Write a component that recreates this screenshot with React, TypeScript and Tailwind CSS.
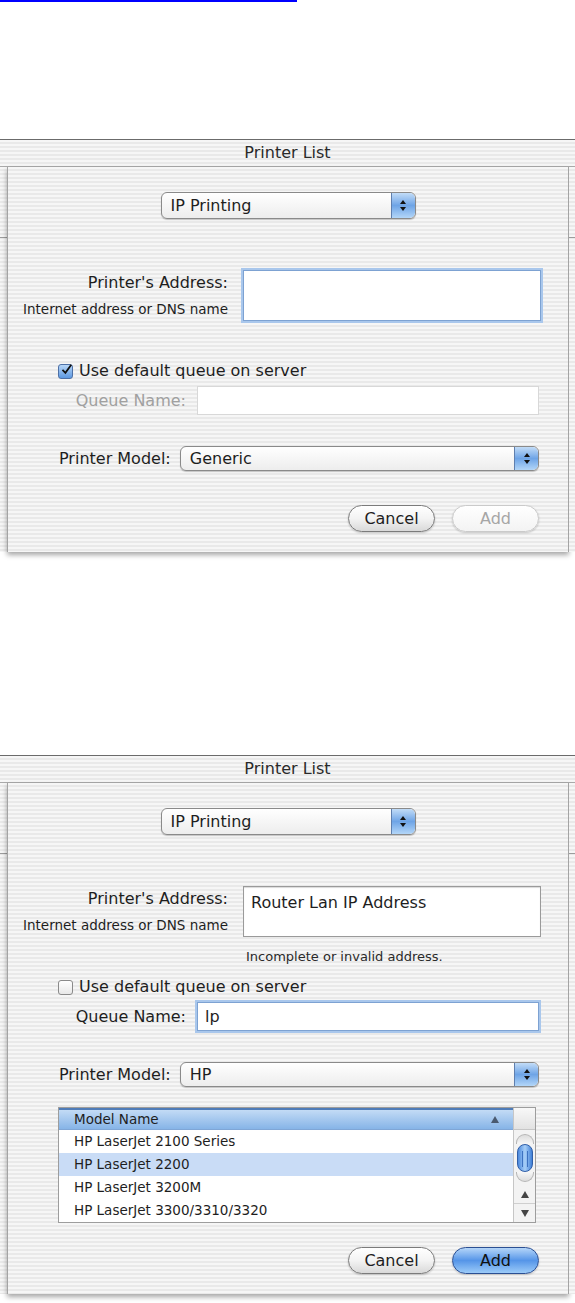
import { ReactNode } from "react";

const stripes =
  "bg-[repeating-linear-gradient(to_bottom,#f6f6f6_0px,#f6f6f6_2px,#e9e9e9_2px,#e9e9e9_4px)]";

function Stepper() {
  return (
    <div className="w-[24px] h-full rounded-r-[5px] border-l border-[#5f7fae] bg-linear-to-b from-[#c2dcf7] via-[#6ea4e6] to-[#b3d6f8] flex items-center justify-center">
      <svg width="8" height="13" viewBox="0 0 8 13">
        <path d="M4 1 L7 5 L1 5 Z" fill="#111" />
        <path d="M4 12 L7 8 L1 8 Z" fill="#111" />
      </svg>
    </div>
  );
}

function Popup({ label, className }: { label: string; className: string }) {
  return (
    <div
      className={`${className} rounded-[6px] border border-[#8a8a8a] bg-linear-to-b from-white to-[#ededed] shadow-[0_1px_1px_rgba(0,0,0,0.2)] flex items-center overflow-hidden`}
    >
      <span className="flex-1 pl-[9px] text-[16px] text-[#1e1e1e]">{label}</span>
      <Stepper />
    </div>
  );
}

function Field({
  focused,
  disabled,
  className,
  children,
}: {
  focused?: boolean;
  disabled?: boolean;
  className: string;
  children?: ReactNode;
}) {
  const ring = focused
    ? "border-[#7da2d2] shadow-[0_0_0_2px_#a9c7ec]"
    : disabled
    ? "border-[#d8d8d8]"
    : "border-[#9a9a9a] shadow-[inset_0_1px_1px_rgba(0,0,0,0.15)]";
  return (
    <div className={`${className} bg-white border ${ring} px-[7px] text-[16px] text-[#1e1e1e]`}>
      {children}
    </div>
  );
}

function Checkbox({ checked }: { checked: boolean }) {
  if (checked) {
    return (
      <div className="w-[15px] h-[15px] rounded-[3px] border border-[#4d70a6] bg-linear-to-b from-[#b7d6f7] to-[#5c98e1] flex items-center justify-center">
        <svg width="15" height="15" viewBox="0 0 15 15" className="-mt-[3px] ml-[2px]">
          <path d="M2 8 L6 12 L14 1" stroke="#111" strokeWidth="2.4" fill="none" />
        </svg>
      </div>
    );
  }
  return (
    <div className="w-[15px] h-[15px] rounded-[3px] border border-[#8a8a8a] bg-linear-to-b from-white to-[#e8e8e8]" />
  );
}

function Button({ label, kind }: { label: string; kind: "plain" | "disabled" | "default" }) {
  const style =
    kind === "default"
      ? "border-[#2b4f93] bg-linear-to-b from-[#b4d5f8] via-[#5595e8] to-[#9ccbf8] text-[#111]"
      : kind === "disabled"
      ? "border-[#cacaca] bg-linear-to-b from-white to-[#f3f3f3] text-[#a6a6a6]"
      : "border-[#7b7b7b] bg-linear-to-b from-white via-[#f3f3f3] to-[#d9d9d9] text-[#1e1e1e]";
  return (
    <div
      className={`w-[87px] h-[27px] rounded-full border ${style} flex items-center justify-center text-[16px] shadow-[0_1px_2px_rgba(0,0,0,0.2)]`}
    >
      {label}
    </div>
  );
}

function ModelTable() {
  const rows = [
    "HP LaserJet 2100 Series",
    "HP LaserJet 2200",
    "HP LaserJet 3200M",
    "HP LaserJet 3300/3310/3320",
  ];
  return (
    <div className="mt-[20px] ml-[50px] mr-[32px] border border-[#9d9d9d] bg-white">
      <div className="flex h-[22px]">
        <div className="flex-1 flex items-center justify-between bg-linear-to-b from-[#c3dbf5] to-[#86b4e7] border-t-2 border-[#4f7cb8] border-b border-b-[#7fa6d6] pl-[15px] pr-[14px] text-[13.5px] text-[#1e1e1e]">
          <span>Model Name</span>
          <svg width="8" height="7" viewBox="0 0 8 7">
            <path d="M4 0 L8 7 L0 7 Z" fill="#4a5a70" />
          </svg>
        </div>
        <div className="w-[22px] bg-linear-to-b from-[#f8f8f8] to-[#e2e2e2] border-l border-[#c6c6c6] border-b border-b-[#c6c6c6]" />
      </div>
      <div className="flex">
        <div className="flex-1">
          {rows.map((r, i) => (
            <div
              key={r}
              className={`h-[23px] flex items-center pl-[15px] text-[13.5px] text-[#1e1e1e] ${
                i === 1 ? "bg-[#c9dcf6]" : "bg-white"
              }`}
            >
              {r}
            </div>
          ))}
        </div>
        <div className="w-[22px] border-l border-[#c6c6c6] bg-[#f3f3f3] flex flex-col items-center">
          <div className="mt-[4px] w-[18px] h-[10px] rounded-t-full border border-b-0 border-[#b5b5b5] bg-linear-to-b from-[#dcdcdc] to-[#f7f7f7]" />
          <div className="w-[16px] h-[28px] rounded-full border border-[#2f5ea8] bg-linear-to-r from-[#4a88dc] via-[#a8cff7] to-[#3f7fd6] flex justify-center">
            <div className="w-[6px] mt-[6px] h-[16px] border-x border-[#3d72c0]" />
          </div>
          <div className="w-[18px] h-[10px] rounded-b-full border border-t-0 border-[#b5b5b5] bg-linear-to-t from-[#dcdcdc] to-[#f7f7f7]" />
          <div className="mt-auto w-full h-[18px] flex items-center justify-center border-b border-[#cfcfcf]">
            <svg width="8" height="7" viewBox="0 0 8 7">
              <path d="M4 0 L8 7 L0 7 Z" fill="#444" />
            </svg>
          </div>
          <div className="w-full h-[18px] flex items-center justify-center">
            <svg width="8" height="7" viewBox="0 0 8 7">
              <path d="M4 7 L8 0 L0 0 Z" fill="#444" />
            </svg>
          </div>
        </div>
      </div>
    </div>
  );
}

function PrinterDialog({ filled, className }: { filled: boolean; className: string }) {
  return (
    <div className={`${className} border-t border-[#6b6b6b]`}>
      <div
        className={`h-[27px] ${stripes} border-b border-[#a9a9a9] flex items-center justify-center text-[16px] text-[#2a2a2a]`}
      >
        Printer List
      </div>
      <div className="flex">
        <div className={`w-[7px] ${stripes}`}>
          <div className="mt-[70px] h-px bg-[#9c9c9c]" />
        </div>
        <div
          className={`flex-1 ${stripes} border-x border-[#a4a4a4] shadow-[0_3px_5px_rgba(0,0,0,0.35)] flex flex-col pt-[25px] pb-[20px]`}
        >
          <div className="flex justify-center">
            <Popup label="IP Printing" className="w-[255px] h-[27px]" />
          </div>

          <div className="mt-[51px] flex">
            <div className="w-[220px] flex flex-col items-end text-[#1e1e1e]">
              <span className="text-[16px] leading-[20px] mt-[3px]">Printer's Address:</span>
              <span className="text-[13.5px] leading-[16px] mt-[8px] whitespace-nowrap">
                Internet address or DNS name
              </span>
            </div>
            <Field focused={!filled} className="ml-[15px] w-[298px] h-[51px] pt-[4px]">
              {filled ? "Router Lan IP Address" : null}
            </Field>
          </div>

          {filled && (
            <div className="mt-[12px] ml-[238px] text-[13px] leading-[16px] text-[#2a2a2a]">
              Incomplete or invalid address.
            </div>
          )}

          <div className={`${filled ? "mt-[13px]" : "mt-[41px]"} h-[18px] pl-[50px] flex items-center gap-[6px]`}>
            <Checkbox checked={!filled} />
            <span className="text-[16px] text-[#1e1e1e]">Use default queue on server</span>
          </div>

          <div className="mt-[6px] h-[29px] flex items-center">
            <span
              className={`w-[178px] text-right text-[16px] ${filled ? "text-[#1e1e1e]" : "text-[#a0a0a0]"}`}
            >
              Queue Name:
            </span>
            <Field
              focused={filled}
              disabled={!filled}
              className="ml-[11px] mr-[29px] flex-1 h-[29px] flex items-center"
            >
              {filled ? "lp" : null}
            </Field>
          </div>

          <div className="mt-[31px] h-[25px] pl-[51px] flex items-center">
            <span className="text-[16px] text-[#1e1e1e]">Printer Model:</span>
            <Popup label={filled ? "HP" : "Generic"} className="ml-[9px] mr-[29px] flex-1 h-[25px]" />
          </div>

          {filled && <ModelTable />}

          <div className={`${filled ? "mt-[24px]" : "mt-[34px]"} flex justify-end gap-[17px] pr-[29px]`}>
            <Button label="Cancel" kind="plain" />
            <Button label="Add" kind={filled ? "default" : "disabled"} />
          </div>
        </div>
        <div className={`w-[6px] ${stripes}`}>
          <div className="mt-[70px] h-px bg-[#9c9c9c]" />
        </div>
      </div>
    </div>
  );
}

export default function App() {
  return (
    <div className="min-h-[1303px] bg-white font-['DejaVu_Sans',sans-serif]">
      <div className="h-[2px] w-[297px] bg-[#0000ff]" />
      <PrinterDialog filled={false} className="mt-[137px]" />
      <PrinterDialog filled={true} className="mt-[203px]" />
    </div>
  );
}
